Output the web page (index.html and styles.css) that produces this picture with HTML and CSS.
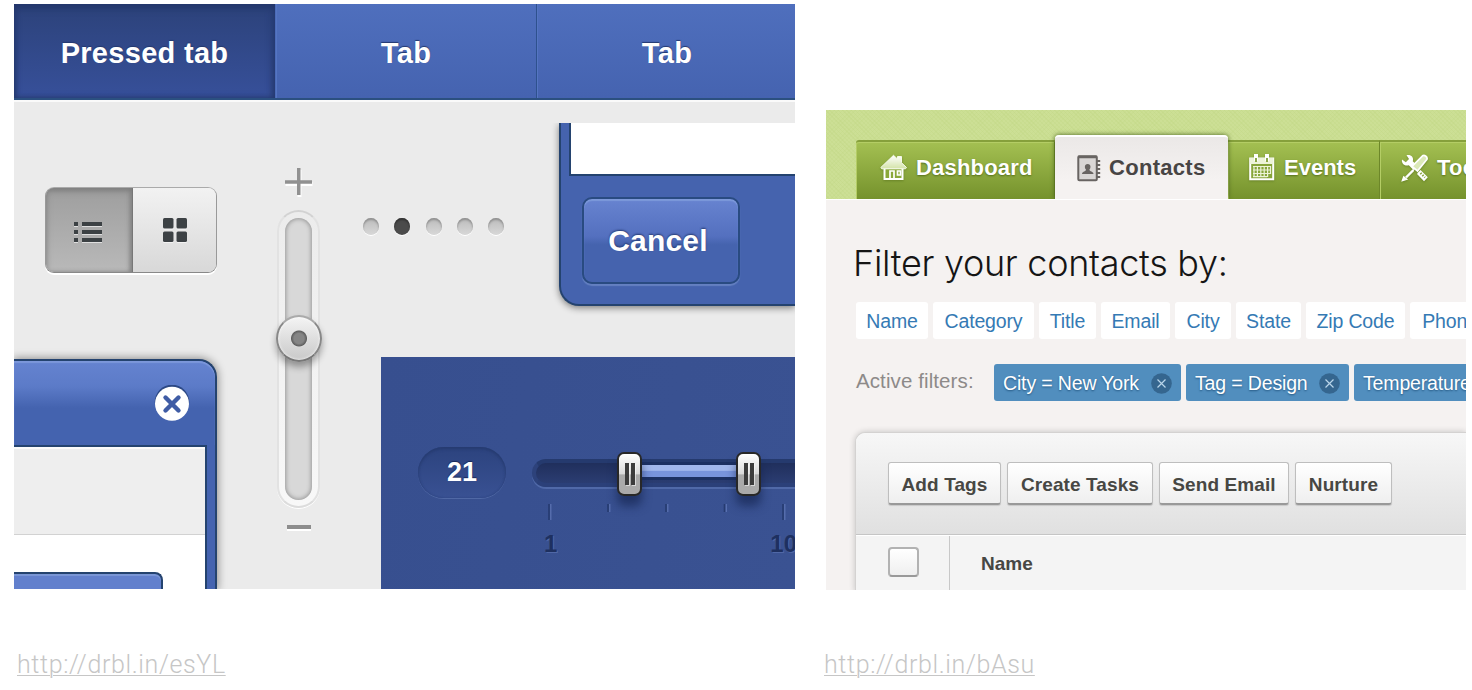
FILE: index.html
```
<!DOCTYPE html>
<html lang="en">
<head>
<meta charset="utf-8">
<title>UI shots</title>
<link rel="stylesheet" href="styles.css">
</head>
<body>
<main class="board">
  <section class="column">
    <div class="kit">
      <nav class="kit-tabs">
        <div class="kit-tab pressed">Pressed tab</div>
        <div class="kit-tab">Tab</div>
        <div class="kit-tab">Tab</div>
      </nav>
      <div class="stage">
        <div class="side">
          <div class="toggle">
            <div class="toggle-half on">
              <svg width="28" height="21" viewBox="0 0 28 21" fill="#3c4144"><path d="M0 0h4v4H0zM8 0h20v4H8zM0 8h4v4H0zM8 8h20v4H8zM0 16h4v4H0zM8 16h20v4H8z"/></svg>
            </div>
            <div class="toggle-half">
              <svg width="24" height="24" viewBox="0 0 24 24" fill="#3c4144"><rect width="10.500" height="10.500" rx="1.500"/><rect x="13.500" width="10.500" height="10.500" rx="1.500"/><rect y="13.500" width="10.500" height="10.500" rx="1.500"/><rect x="13.500" y="13.500" width="10.500" height="10.500" rx="1.500"/></svg>
            </div>
          </div>
          <div class="modal">
            <div class="modal-head">
              <svg width="36" height="37" viewBox="0 0 36 37"><circle cx="18" cy="17" r="17.300" fill="#2c4884"/><circle cx="18" cy="18.800" r="17" fill="#fff"/><path d="M11.500 12.500l13 13M24.500 12.500l-13 13" stroke="#3f5ca5" stroke-width="4.400" stroke-linecap="round"/></svg>
            </div>
            <div class="modal-body">
              <div class="modal-strip"></div>
              <div class="modal-button"></div>
            </div>
          </div>
        </div>
        <div class="volume">
          <svg width="29" height="29" viewBox="0 0 29 29"><path d="M13 1h4v12h11v4H17v11h-4V17H1v-4h12z" fill="#fff" transform="translate(.5 1)"/><path d="M13 0h3.500v12.300H28v3.500H16.500V27H13V15.800H1v-3.500h12z" fill="#919191"/></svg>
          <div class="volume-track"><div class="volume-groove"></div><div class="knob"></div></div>
          <div class="minus"></div>
        </div>
        <div class="rest">
          <div class="rest-top">
            <div class="dots"><i></i><i class="current"></i><i></i><i></i><i></i></div>
            <div class="dialog">
              <div class="dialog-body"></div>
              <div class="cancel">Cancel</div>
            </div>
          </div>
          <div class="panel">
            <div class="range-row">
              <div class="value">21</div>
              <div class="range">
                <div class="range-fill"></div>
                <div class="handle first"><b></b><b></b></div>
                <div class="handle second"><b></b><b></b></div>
              </div>
            </div>
            <svg class="ticks" width="250" height="18" viewBox="0 0 250 18"><path d="M5 0v16M64 0v8M122 0v8M180.500 0v8M239 0v16" stroke="#263b70" stroke-width="1.600"/><path d="M6.800 0v16M65.800 0v8M123.800 0v8M182.300 0v8M240.800 0v16" stroke="#5d74b4" stroke-width="1.200"/></svg>
            <div class="scale"><span>1</span><span>10</span></div>
          </div>
        </div>
      </div>
    </div>
    <a class="source" href="#">http://drbl.in/esYL</a>
  </section>

  <section class="column">
    <div class="crm">
      <nav class="nav">
        <div class="nav-tab dash">
          <svg width="27" height="27" viewBox="0 0 27 27"><defs><linearGradient id="roof" x2="0" y2="1"><stop offset="0" stop-color="#fff"/><stop offset="1" stop-color="#d3e3a8"/></linearGradient></defs><path d="M4.500 14h18v11h-18z" fill="#8aa83a" stroke="#fff" stroke-width="2"/><path d="M10 24v-7h4v7M17.500 17h3v4h-3z" fill="none" stroke="#fff" stroke-width="1.700"/><path d="M.8 13.500L13.500 1.300l4 3.700V2.500h4v6.200l5 4.800-1 1.300H1.800z" fill="url(#roof)" stroke="#f6faea" stroke-width="1"/></svg>
          <span>Dashboard</span>
        </div>
        <div class="nav-tab active">
          <svg width="24" height="27" viewBox="0 0 24 27"><rect x="1.300" y="1.300" width="18.500" height="24" rx="1" fill="#d9d6d5" stroke="#686462" stroke-width="2"/><path d="M1 2h19" stroke="#686462" stroke-width="2.500"/><path d="M20 6h3.200M20 10h3.200M20 14h3.200M20 18h3.200M20 22h3.200" stroke="#686462" stroke-width="2"/><path d="M5 19c0-3 4-2 4-4.500-1.500-1-2-5.500 1.700-5.500s3.200 4.500 1.700 5.500c0 2.500 4.100 1.500 4.100 4.500z" fill="#686462"/></svg>
          <span>Contacts</span>
        </div>
        <div class="nav-tab events">
          <svg width="26" height="27" viewBox="0 0 26 27"><path d="M1.200 4.500h23v20.700h-23z" fill="#87a53a" stroke="#fff" stroke-width="2"/><path d="M1 4h23.500v6H1z" fill="#edf4d9"/><path d="M7 0v7M18 0v7" stroke="#fff" stroke-width="4"/><path d="M7 4v4M18 4v4" stroke="#819f35" stroke-width="1.800"/><path d="M4 12.500h18M4 16h18M4 19.500h18M4 22.700h14M5 12v11M8.400 12v11M11.800 12v11M15.200 12v11M18.600 12v11M21.500 12v8" stroke="#edf4d9" stroke-width="1.200"/></svg>
          <span>Events</span>
        </div>
        <div class="nav-tab tools">
          <svg width="28" height="28" viewBox="0 0 28 28"><path d="M5.500 1.200c4.500-1 7.500 2 6.300 6l5 5-4 4-5-5C3.500 12.500.2 9.500 1 5.500l3.800 2.700L8 5z" fill="#fff"/><path d="M17 18.500l2.500-2.500 7.300 7.300-3.800 4-7-7.300z" fill="#fff"/><path d="M19.500 19l4.500 4.500" stroke="#87a53a" stroke-width="2.200" stroke-dasharray="1.400 1.400"/><path d="M21.500 1.800c2-1.500 5.500 1.500 4.300 3.700L16.500 17l-5.500-4.500z" fill="#dce9b9" stroke="#fff" stroke-width="1.700"/><path d="M12.500 16L5 23.500" stroke="#fff" stroke-width="2.400"/><path d="M1.200 26.800l1.500-4 3.200 2.500z" fill="#fff" stroke="#fff" stroke-width="1.200"/></svg>
          <span>Tools</span>
        </div>
      </nav>
      <div class="page">
        <h1>Filter your contacts by:</h1>
        <div class="filters">
          <span class="w-name">Name</span><span class="w-cat">Category</span><span class="w-title">Title</span><span class="w-email">Email</span><span class="w-city">City</span><span class="w-state">State</span><span class="w-zip">Zip Code</span><span class="w-phone">Phone</span>
        </div>
        <div class="active-row">
          <span class="label">Active filters:</span>
          <span class="chip c-city">City = New York <svg width="21" height="21" viewBox="0 0 21 21"><circle cx="10.500" cy="10.500" r="10.300" fill="#35668f"/><path d="M6.500 6.500l8 8M14.500 6.500l-8 8" stroke="#b9d5ea" stroke-width="1.200"/></svg></span>
          <span class="chip c-tag">Tag = Design <svg width="21" height="21" viewBox="0 0 21 21"><circle cx="10.500" cy="10.500" r="10.300" fill="#35668f"/><path d="M6.500 6.500l8 8M14.500 6.500l-8 8" stroke="#b9d5ea" stroke-width="1.200"/></svg></span>
          <span class="chip c-temp">Temperature</span>
        </div>
        <div class="table">
          <div class="actions">
            <span class="b-add">Add Tags</span><span class="b-task">Create Tasks</span><span class="b-send">Send Email</span><span class="b-nurt">Nurture</span>
          </div>
          <div class="head-row">
            <div class="check-cell"><i></i></div>
            <div class="name-cell">Name</div>
          </div>
        </div>
      </div>
    </div>
    <a class="source right" href="#">http://drbl.in/bAsu</a>
  </section>
</main>
</body>
</html>
```
FILE: styles.css
```
* { box-sizing: border-box; }
body { margin: 0; background: #fff; font-family: "Liberation Sans", Arial, sans-serif; overflow: hidden; }
svg { display: block; flex: none; }
.board { display: grid; grid-template-columns: 781px 640px; column-gap: 31px; padding: 4px 0 0 14px; height: 690px; }
.column { display: flex; flex-direction: column; }

/* Blue interface kit */
.kit { height: 585px; background: #ebebeb; overflow: hidden; display: flex; flex-direction: column; }
.kit-tabs { display: flex; height: 96px; flex: none; border-bottom: 2px solid #2b5080; box-shadow: 0 2px 0 #fafafa; }
.kit-tab { flex: 0 0 261px; display: flex; align-items: center; justify-content: center; padding-top: 5px; color: #fff; font-weight: bold; font-size: 29px; letter-spacing: .3px; text-shadow: 0 -1px 1px #24396f; background: linear-gradient(#4f6fbd, #4563b0); border-left: 1px solid #2e518e; box-shadow: inset 1px 0 0 #5575c2; }
.kit-tab.pressed { background: linear-gradient(#2c427a, #37509a); border-left: 0; box-shadow: inset 0 4px 7px #23366a, inset -3px 0 6px #293f78, inset 2px 0 4px #293f78; }
.kit-tab.pressed + .kit-tab { border-left-color: #4b6bb8; }
.stage { flex: 1; display: flex; min-height: 0; }
.side { width: 203px; display: flex; flex-direction: column; padding-top: 87px; }
.toggle { display: flex; flex: none; width: 172px; height: 86px; margin: 0 0 86px 31px; border: 1.500px solid #999; border-color: #aaa #999 #888 #999; border-radius: 9px; overflow: hidden; box-shadow: 0 2px 0 #fff; }
.toggle-half { flex: 1; display: flex; align-items: center; justify-content: center; background: linear-gradient(#f2f2f2, #d8d8d8); }
.toggle-half svg { filter: drop-shadow(0 1px 0 #ffffff99); }
.toggle-half.on { flex: 0 0 87px; padding: 5px 2px 0 0; border-right: 1px solid #777; background: linear-gradient(#9e9e9e, #b9b9b9); box-shadow: inset 0 3px 6px #7c7c7c, inset -2px 0 4px #8c8c8c; }
.modal { flex: 1; min-height: 0; border: solid #24436f; border-width: 2px 2px 0 0; border-radius: 0 18px 0 0; background: #4463b0; box-shadow: 0 0 8px 1px #0006; display: flex; flex-direction: column; overflow: hidden; }
.modal-head { flex: none; height: 84px; padding: 24px 25px 0 0; display: flex; justify-content: flex-end; background: linear-gradient(#6583d0 0, #5c7bc8 30%, #4463af 56%, #4463af); box-shadow: inset 0 2px 1px #7c97da; border-radius: 0 16px 0 0; }
.modal-body { flex: 1; margin-right: 8px; background: #fff; border: solid #24436f; border-width: 2px 2px 0 0; display: flex; flex-direction: column; }
.modal-strip { flex: none; height: 88px; background: #eee; border-top: 2px solid #fafafa; border-bottom: 1px solid #d2d2d2; }
.modal-button { flex: 1; width: 149px; margin-top: 37px; border: solid #24436f; border-width: 2px 2px 0 0; border-radius: 0 8px 0 0; background: #6280cd; box-shadow: inset 0 2px 0 #7a96d6; }
.volume { width: 47px; margin: 0 1px 0 58px; padding-top: 68px; display: flex; flex-direction: column; align-items: center; }
.volume-track { position: relative; flex: none; width: 43px; height: 298px; margin-top: 13px; border-radius: 22px; border: 2px solid #dcdcdc; border-color: #d2d2d2 #e2e2e2 #dcdcdc; background: linear-gradient(#ececec, #f8f8f8); padding: 6px; box-shadow: 0 1px 0 #fff; }
.volume-groove { height: 282px; border-radius: 14px; background: #d8d8d8; box-shadow: inset 0 0 4px 1px #999; }
.knob { position: absolute; left: -3.500px; top: 103px; width: 46px; height: 47px; border-radius: 50%; background: radial-gradient(circle at 50% 50%, #858585 0 5px, #606060 7.500px, #e1e1e1 8.500px, transparent 9px), linear-gradient(#f4f4f4, #c9c9c9); border: 2px solid #858585; border-color: #aaa #888 #777; box-shadow: 0 5px 7px #0005, inset 0 0 3px #fff; }
.minus { width: 24px; height: 4px; margin-top: 17px; background: #8d8d8d; box-shadow: 0 2px 0 #fff; }
.rest { flex: 1; min-width: 0; display: flex; flex-direction: column; }
.rest-top { display: flex; height: 257px; padding-left: 40px; }
.dots { display: flex; width: 196px; gap: 15.300px; padding-top: 118px; }
.dots i { width: 16px; height: 17px; border-radius: 50%; background: linear-gradient(#bbb, #d8d8d8); box-shadow: inset 0 2px 2px #909090, 0 1px 0 #fff; }
.dots .current { background: #4b4b4b; box-shadow: inset 0 2px 2px #333, 0 1px 0 #fff; }
.dialog { flex: 1; height: 183px; margin-top: 23px; background: #4563ae; border: solid #24436f; border-width: 0 0 2px 2px; border-radius: 0 0 0 20px; box-shadow: 0 2px 7px #0007; clip-path: inset(0 0 -14px -14px); padding-left: 8px; }
.dialog-body { height: 53px; background: #fff; border: solid #24436f; border-width: 0 0 2px 2px; }
.cancel { width: 158px; height: 87px; margin: 21px 0 0 13px; display: flex; align-items: center; justify-content: center; padding: 1px 6px 0 0; color: #fff; font-weight: bold; font-size: 30px; text-shadow: 0 -1px 2px #263b72; letter-spacing: .2px; border: 2px solid #294b81; border-radius: 10px; background: linear-gradient(#6783d0, #5470bf 45%, #4563ae 55%); box-shadow: inset 0 2px 1px #7d99da, 0 2px 1px #6480c1; }
.panel { flex: 1; margin-left: 58px; background: linear-gradient(100deg, #374f8f, #3a5292); padding-top: 90px; overflow: hidden; }
.range-row { display: flex; align-items: center; height: 51px; padding-left: 37px; }
.value { width: 88px; height: 51px; flex: none; border-radius: 26px; background: linear-gradient(#2c437e, #395193); box-shadow: inset 0 2px 3px #263b70, inset 0 0 2px #2d447f, 0 1px 0 #5068a5; display: flex; align-items: center; justify-content: center; color: #fff; font-size: 27px; font-weight: bold; text-shadow: 0 -1px 1px #182858; }
.range { position: relative; flex: 1; height: 28px; margin-left: 26px; border: 4px solid #2d427b; border-color: #253a6e #2d427b #2b4079; border-right: 0; border-radius: 14px 0 0 14px; background: linear-gradient(#202f5c, #2b3d72); box-shadow: 0 2px 0 #5069a8; }
.range-fill { position: absolute; left: 103px; top: 2px; width: 101px; height: 12px; background: linear-gradient(#a1b7ec 45%, #7894dc 50%); box-shadow: 0 0 0 3px #1c3062; }
.handle { position: absolute; top: -11px; width: 25px; height: 44px; border: 2px solid #282828; border-radius: 7px; background: linear-gradient(#fff, #d9d9d9 50%, #aaa 52%, #aaa); box-shadow: 0 10px 10px #13214b99; display: flex; justify-content: center; align-items: center; gap: 2px; }
.handle.first { left: 81px; }
.handle.second { left: 200px; }
.handle b { width: 4px; height: 22px; background: #3c3c3c; box-shadow: 1px 1px 0 #fff8; }
.ticks { margin: 6px 0 0 163px; }
.scale { display: flex; margin: 8px 0 0 163px; gap: 213px; color: #1e3060; font-weight: bold; font-size: 24px; line-height: 27px; text-shadow: 1px 1px 0 #5068a7; white-space: nowrap; }

/* Green contact manager */
.crm { margin-top: 106px; height: 480px; overflow: hidden; background: #f5f2f1; display: flex; flex-direction: column; }
.nav { flex: none; height: 90px; padding-left: 30px; display: flex; align-items: flex-end; overflow: hidden; border-bottom: 1px solid #fff; background: repeating-linear-gradient(45deg, transparent 0 2px, #c0d68255 2px 3px), repeating-linear-gradient(-45deg, #ccdf95 0 2px, #c9dd91 2px 3px); }
.nav-tab { flex: none; height: 59px; display: flex; align-items: center; gap: 9px; padding-bottom: 6px; color: #fff; font-weight: bold; font-size: 22px; letter-spacing: .2px; text-shadow: 0 1px 2px #56701c; border-top: 2px solid #86a03b; border-right: 1px solid #6d8729; background: linear-gradient(#a4c052, #75922c); box-shadow: inset 1px 1px 0 #b4cd65; }
.nav-tab svg { filter: drop-shadow(0 1px 1px #56701c99); }
.dash { width: 199px; padding-left: 24px; border-radius: 3px 0 0 0; }
.active { width: 173px; height: 64px; padding-left: 22px; gap: 8px; padding-bottom: 0; letter-spacing: .3px; color: #484544; text-shadow: none; border: 0; border-top: 2px solid #fff; border-radius: 4px 4px 0 0; background: linear-gradient(#ebe8e7, #f5f2f1 70%); box-shadow: 0 0 5px #46601a; position: relative; }
.active svg { filter: none; }
.events { width: 152px; padding-left: 21px; letter-spacing: 0; }
.tools { width: 150px; padding-left: 21px; gap: 8px; }
.page { flex: 1; padding: 0 0 0 30px; }
h1 { margin: 0 0 0 -3px; padding-top: 37px; height: 102px; font: 300 36px/52px Inter, "Liberation Sans", sans-serif; letter-spacing: -.3px; color: #151515; white-space: nowrap; }
.filters { display: flex; gap: 5px; height: 37px; font-size: 19.500px; color: #357ab4; white-space: nowrap; letter-spacing: -.15px; }
.filters span { flex: none; background: #fff; border-radius: 3px; display: flex; align-items: center; justify-content: center; padding-top: 1px; }
.w-name { width: 72px; } .w-cat { width: 101px; } .w-title { width: 57px; } .w-email { width: 69px; }
.w-city { width: 56px; } .w-state { width: 65px; } .w-zip { width: 99px; } .w-phone { width: 80px; }
.active-row { display: flex; align-items: center; gap: 5px; height: 37px; margin-top: 25px; white-space: nowrap; }
.label { width: 133px; flex: none; font-size: 20.500px; letter-spacing: .1px; color: #8d8a89; padding-bottom: 3px; }
.chip { flex: none; height: 37px; border-radius: 3px; background: #518ebe; color: #fff; font-size: 19.500px; letter-spacing: -.15px; text-shadow: 0 1px 2px #245782; display: flex; align-items: center; justify-content: space-between; padding: 1px 9px 0; }
.c-city { width: 187px; } .c-tag { width: 163px; } .c-temp { width: 170px; }
.table { margin: 31px 0 0 -1px; height: 160px; background: #f4f4f4; border: solid #d4d2d1; border-width: 1px 0 0 1px; border-radius: 10px 0 0 0; box-shadow: 0 0 6px #0003; overflow: hidden; }
.actions { display: flex; gap: 6px; height: 102px; padding: 29px 0 0 32px; background: linear-gradient(#f7f7f7, #e0e0e0); border-bottom: 1px solid #c5c5c5; color: #474743; font-size: 19px; font-weight: bold; letter-spacing: .1px; white-space: nowrap; }
.actions span { flex: none; height: 43px; border: 1px solid #bebebe; border-bottom: 2px solid #999; border-radius: 3px; background: linear-gradient(#fff, #efefef); box-shadow: 0 1px 1px #0002; display: flex; align-items: center; justify-content: center; padding-top: 3px; }
.b-add { width: 113px; } .b-task { width: 146px; } .b-send { width: 130px; } .b-nurt { width: 97px; }
.head-row { display: flex; height: 60px; border-top: 1px solid #fff; }
.check-cell { width: 94px; border-right: 1px solid #c8c8c8; padding: 11px 0 0 32px; }
.check-cell i { display: block; width: 31px; height: 30px; border: 2px solid #b2b2b2; border-bottom-color: #999; border-radius: 4px; background: linear-gradient(#fff, #efefef); }
.name-cell { padding: 16px 0 0 31px; font-size: 19px; line-height: 24px; font-weight: bold; color: #474743; }

.source { align-self: flex-start; margin: 60px 0 0 3px; font: 300 25px/32px Roboto, sans-serif; letter-spacing: .62px; color: #c6c6c6; text-decoration: underline; text-decoration-thickness: 1px; text-underline-offset: 2px; }
.source.right { margin: 59px 0 0 -2px; }
```
